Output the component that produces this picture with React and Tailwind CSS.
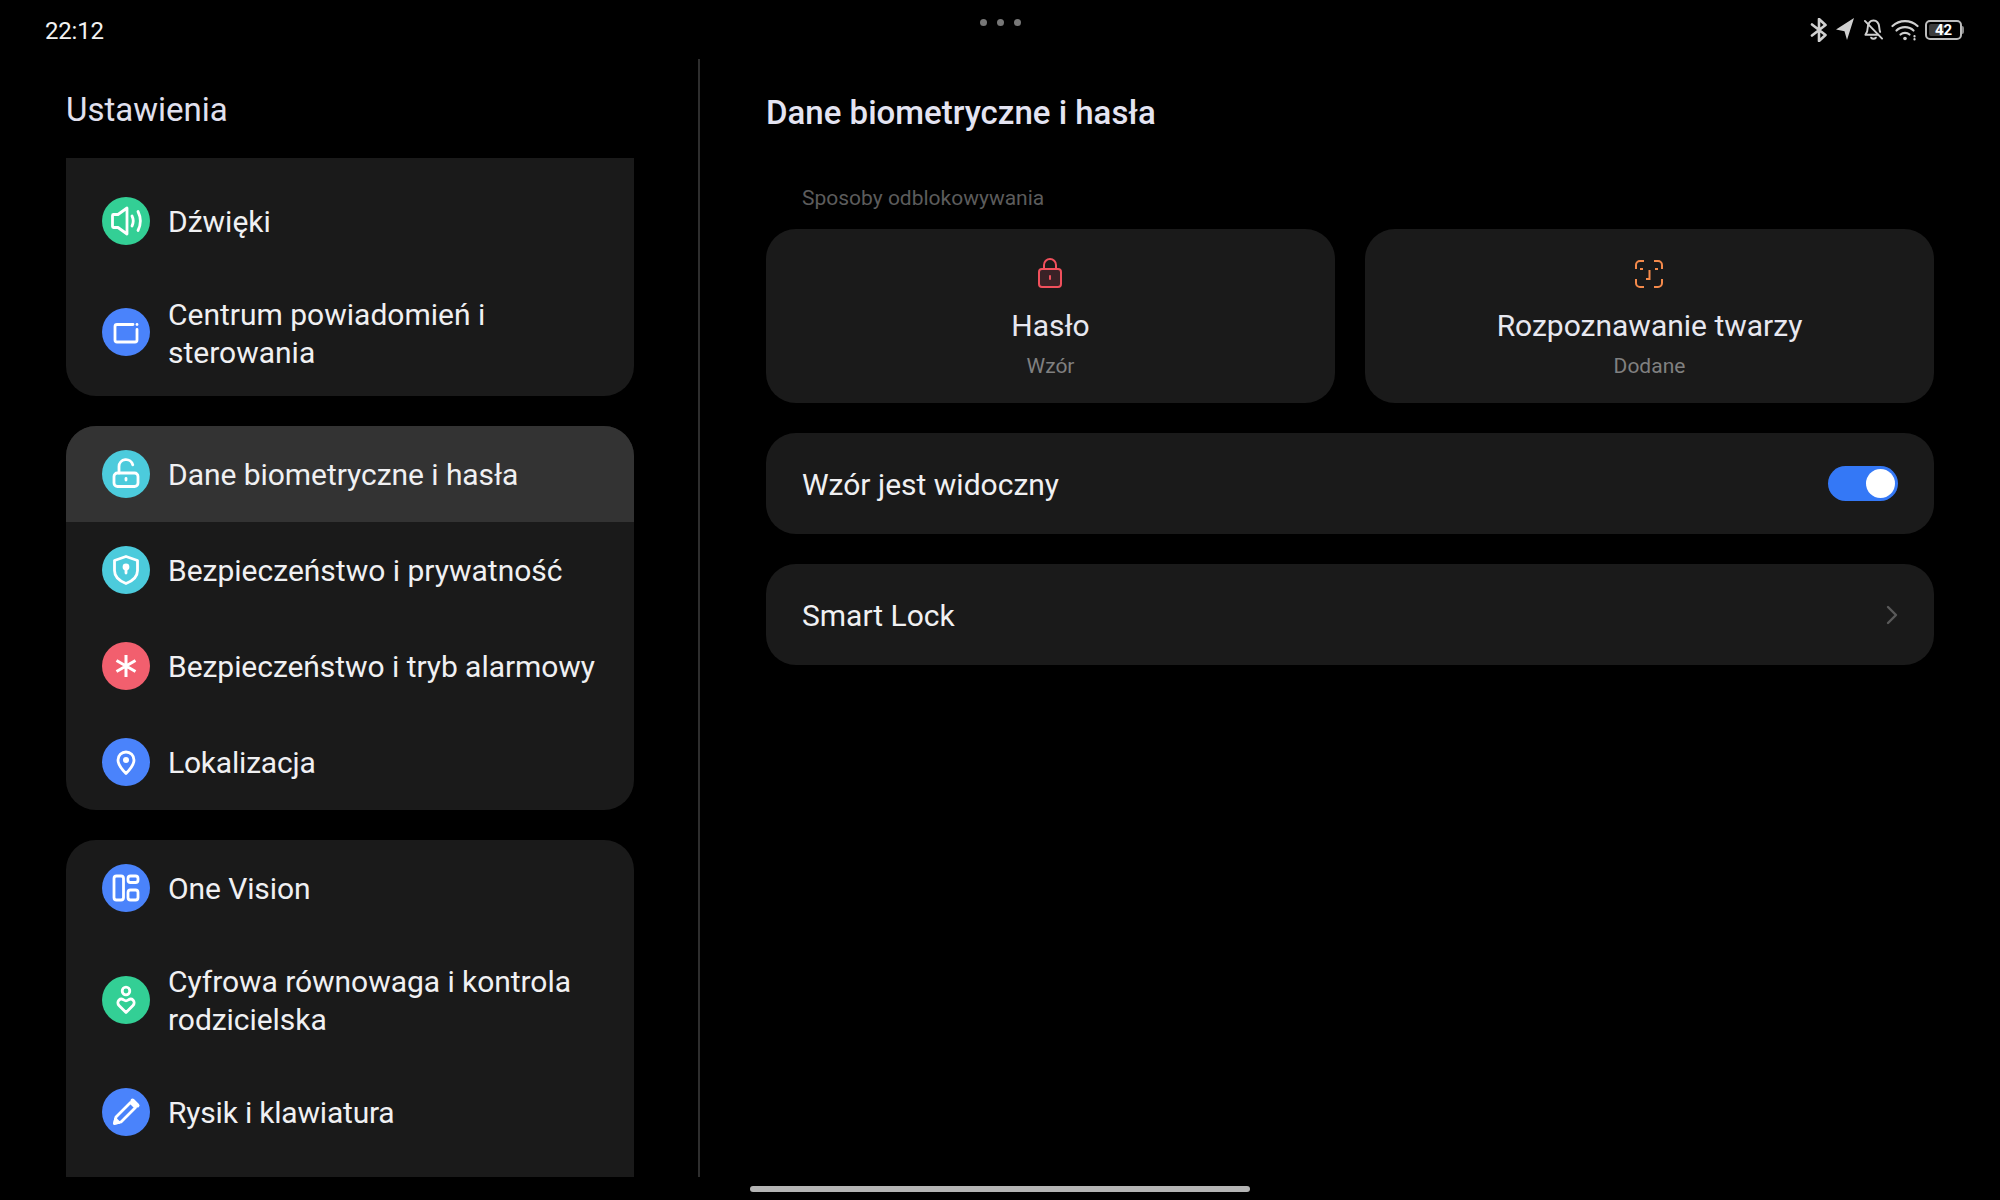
import { ChevronRight } from 'lucide-react';

const BLUE = 'bg-[#4a83fb]';
const GREEN = 'bg-[#33cf95]';
const TEAL = 'bg-[#4ccbdc]';
const RED = 'bg-[#f25f6e]';

// menu icons, all on a 48px circle with white strokes
function Glyph({ children }) {
  return (
    <svg viewBox="0 0 48 48" className="w-12 h-12" fill="none" stroke="white" strokeWidth="2.8" strokeLinecap="round" strokeLinejoin="round">
      {children}
    </svg>
  );
}

const icons = {
  sound: (
    <Glyph>
      <path d="M11.500 17.500h4.500l9-6.500v26l-9-6.500h-4.500a1 1 0 0 1-1-1v-11a1 1 0 0 1 1-1z" />
      <path d="M30 19c1.600 3.200 1.600 6.800 0 10" />
      <path d="M36 14.500c3 6 3 13 0 19" />
    </Glyph>
  ),
  panel: (
    <Glyph>
      <path d="M31 16.500H15a2 2 0 0 0-2 2v13.500a2 2 0 0 0 2 2h18a2 2 0 0 0 2-2V21.500" />
      <path d="M35 16.500h.01" />
    </Glyph>
  ),
  unlock: (
    <Glyph>
      <rect x="12" y="23" width="24" height="13.500" rx="3.500" />
      <path d="M17 23v-6.500a7 7 0 0 1 13.800-1.600" />
      <path d="M24 28.500v1.500" />
    </Glyph>
  ),
  shield: (
    <Glyph>
      <path d="M24 10.500l11.500 4v10c0 6.200-5 10.500-11.500 13-6.500-2.500-11.500-6.800-11.500-13v-10z" />
      <circle cx="24" cy="21" r="2" fill="white" />
      <path d="M24 22v5" />
    </Glyph>
  ),
  asterisk: (
    <Glyph>
      <path d="M24 13v22M14.500 18.500l19 11M33.500 18.500l-19 11" strokeWidth="3" strokeLinecap="butt" />
    </Glyph>
  ),
  pin: (
    <Glyph>
      <path d="M24 35.500c-4.600-4.600-8-8.500-8-13.500a8 8 0 0 1 16 0c0 5-3.400 8.900-8 13.500z" />
      <circle cx="24" cy="22" r="3" fill="white" stroke="none" />
    </Glyph>
  ),
  vision: (
    <Glyph>
      <rect x="12" y="12" width="9.500" height="24" rx="2.500" />
      <rect x="26" y="12" width="10" height="6.500" rx="2.500" />
      <rect x="26" y="26" width="10" height="10" rx="2.500" />
    </Glyph>
  ),
  balance: (
    <Glyph>
      <circle cx="24" cy="15" r="3.800" />
      <path d="M24 36.500l-7-7a3.900 3.900 0 0 1 0-5.500c1.500-1.400 3-1.100 4-.5s1.700 1.300 3 1.300 2-.7 3-1.300 2.500-.9 4 .5a3.900 3.900 0 0 1 0 5.500z" />
    </Glyph>
  ),
  pen: (
    <Glyph>
      <path d="M12.500 35.500l1.500-6.500 14.500-14.500 5 5-14.500 14.500z" fill="none" />
      <path d="M30.500 12.500l5 5" strokeWidth="4" />
      <path d="M12.500 35.500l1-4.500 3.500 3.500z" fill="white" />
    </Glyph>
  ),
};

function Row({ color, icon, active, className = '', textClass = '', children }) {
  return (
    <div className={`flex items-center gap-[18px] pl-9 pr-4 ${active ? 'bg-[#333333]' : ''} ${className}`}>
      <div className={`w-12 h-12 rounded-full shrink-0 ${color}`}>{icons[icon]}</div>
      <div className={`pt-[2px] text-[30px] leading-[38px] text-[#f0f0f2] ${textClass}`}>{children}</div>
    </div>
  );
}

function Card({ className = '', children }) {
  return <div className={`bg-[#1a1a1a] overflow-hidden ${className}`}>{children}</div>;
}

function StatusIcons() {
  return (
    <div className="flex items-center h-6 text-[#d0d0d0]">
      <svg viewBox="0 0 18 24" className="w-[18px] h-6" fill="none" stroke="currentColor" strokeWidth="2.600" strokeLinecap="round" strokeLinejoin="round">
        <path d="M2 6.500l13.500 10.500-6.500 6V1l6.500 6L2 17.500" />
      </svg>
      <svg viewBox="0 0 18 24" className="w-[18px] h-6 ml-2" fill="currentColor">
        <path d="M18 0L0 11.500l8.500 1.800 2.500 8.700z" />
      </svg>
      <svg viewBox="0 0 22 24" className="w-[21px] h-6 ml-[9px]" fill="none" stroke="currentColor" strokeWidth="2" strokeLinecap="round" strokeLinejoin="round">
        <path d="M5 9C5.500 4 8 2 11 2s5.500 2 6 7c.2 1.800.3 3.500 1 5M5 9c0 3-1 6-2.500 8H16" />
        <path d="M8.500 20c1.200 1.600 3.800 1.600 5 0" />
        <path d="M2 2.500l18 18.500" />
      </svg>
      <svg viewBox="0 0 28 24" className="w-7 h-6 ml-[7px]" fill="none" stroke="currentColor" strokeWidth="2.200" strokeLinecap="round">
        <path d="M1.500 8c7-6.500 18-6.500 25 0" />
        <path d="M5.500 12.500c4.500-4.500 12.500-4.500 17 0" />
        <path d="M9.500 16.500c2.500-2.300 6.500-2.300 9 0" />
        <circle cx="14" cy="20.500" r="1.800" fill="currentColor" stroke="none" />
        <path d="M23.500 18v.5M23.500 21v.5" />
      </svg>
      <div className="flex items-center ml-[6px]">
        <div className="w-[37px] h-[20px] rounded-[5px] border-2 border-[#bdbdbd] p-[2px] relative flex items-center">
          <div className="h-full w-[50%] rounded-[2px] bg-[#3d3d3d]" />
          <span className="absolute inset-0 flex items-center justify-center text-[15px] font-bold leading-none text-white">42</span>
        </div>
        <div className="w-[2px] h-2 rounded-r-sm bg-[#888888]" />
      </div>
    </div>
  );
}

function MethodCard({ icon, title, sub }) {
  return (
    <div className="flex-1 h-[174px] rounded-[30px] bg-[#1a1a1a] flex flex-col items-center pt-[29px]">
      {icon}
      <div className="mt-[17px] text-[30px] leading-[38px] text-[#e8e8f0]">{title}</div>
      <div className="mt-[7px] text-[21px] leading-[28px] text-[#808080]">{sub}</div>
    </div>
  );
}

export default function App() {
  return (
    <div className="relative w-[2000px] h-[1200px] bg-black overflow-hidden font-['Roboto',sans-serif] flex flex-col">
      {/* status bar */}
      <div className="h-[59px] shrink-0 flex items-start justify-between pl-[45px] pr-[36px] pt-[16px]">
        <div className="text-[24px] leading-[30px] text-[#f2f2f2] tracking-[-0.2px]">22:12</div>
        <div className="absolute left-[980px] top-[19px] flex gap-[10px]">
          <div className="w-[7px] h-[7px] rounded-full bg-[#777777]" />
          <div className="w-[7px] h-[7px] rounded-full bg-[#777777]" />
          <div className="w-[7px] h-[7px] rounded-full bg-[#777777]" />
        </div>
        <div className="mt-[2px]"><StatusIcons /></div>
      </div>

      <div className="flex flex-1 min-h-0 pb-[23px]">
        {/* left column */}
        <div className="w-[700px] shrink-0 pl-[66px] pr-[64px] flex flex-col border-r-2 border-[#2e2e2e]">
          <div className="h-[99px] shrink-0 pt-[29px] text-[33px] leading-[44px] text-[#e0e0ee]">Ustawienia</div>
          <Card className="rounded-b-[30px] h-[238px]">
            <Row color={GREEN} icon="sound" className="h-[110px] pt-[15px]"><span>Dźwięki</span></Row>
            <Row color={BLUE} icon="panel" className="h-[128px]" textClass="pt-[4px]">Centrum powiadomień i sterowania</Row>
          </Card>
          <Card className="rounded-[30px] mt-[30px] h-[384px]">
            <Row color={TEAL} icon="unlock" active className="h-[96px]" textClass="tracking-[-0.05px]">Dane biometryczne i hasła</Row>
            <Row color={TEAL} icon="shield" className="h-[96px]">Bezpieczeństwo i prywatność</Row>
            <Row color={RED} icon="asterisk" className="h-[96px]" textClass="tracking-[-0.05px]">Bezpieczeństwo i tryb alarmowy</Row>
            <Row color={BLUE} icon="pin" className="h-[96px]" textClass="tracking-[-0.2px]">Lokalizacja</Row>
          </Card>
          <Card className="rounded-t-[30px] mt-[30px] flex-1">
            <Row color={BLUE} icon="vision" className="h-[96px]" textClass="tracking-[-0.1px]">One Vision</Row>
            <Row color={GREEN} icon="balance" className="h-[128px]" textClass="tracking-[-0.05px]">Cyfrowa równowaga i kontrola rodzicielska</Row>
            <Row color={BLUE} icon="pen" className="h-[96px]" textClass="tracking-[-0.2px] pt-0">Rysik i klawiatura</Row>
          </Card>
        </div>

        {/* right column */}
        <div className="flex-1 pl-[66px] pr-[66px]">
          <div className="h-[99px] pt-[32px] text-[33px] leading-[44px] font-medium text-[#e4e4f2]">Dane biometryczne i hasła</div>
          <div className="h-[71px] pt-[26px] pl-9 text-[21px] leading-[28px] text-[#5c5c5c]">Sposoby odblokowywania</div>
          <div className="flex gap-[30px]">
            <MethodCard
              title="Hasło"
              sub="Wzór"
              icon={
                <svg viewBox="0 0 28 32" className="w-7 h-8 mr-[2px]" fill="none" stroke="#f0505c" strokeWidth="2" strokeLinecap="round">
                  <rect x="3" y="11" width="22" height="18" rx="3" fill="#3a2226" />
                  <path d="M8 11V7a6 6 0 0 1 12 0v4" />
                  <path d="M14 18v3" />
                </svg>
              }
            />
            <MethodCard
              title="Rozpoznawanie twarzy"
              sub="Dodane"
              icon={
                <svg viewBox="0 0 30 30" className="w-[30px] h-8 mr-[2px]" fill="none" stroke="#f58a4b" strokeWidth="2">
                  <path d="M2 10V6a4 4 0 0 1 4-4h4M20 2h4a4 4 0 0 1 4 4v4M2 20v4a4 4 0 0 0 4 4h4M28 20v4a4 4 0 0 1-4 4h-4" />
                  <path d="M6 10h3M21 10h3" />
                  <path d="M15.500 11v9H12" />
                </svg>
              }
            />
          </div>
          <div className="mt-[30px] h-[101px] rounded-[30px] bg-[#1a1a1a] flex items-center justify-between pl-9 pr-9">
            <div className="pt-[2px] text-[30px] text-[#f0f0f2]">Wzór jest widoczny</div>
            <div className="w-[70px] h-[35px] rounded-full bg-[#3478f6] flex items-center justify-end pr-[3px]">
              <div className="w-[29px] h-[29px] rounded-full bg-white" />
            </div>
          </div>
          <div className="mt-[30px] h-[101px] rounded-[30px] bg-[#1a1a1a] flex items-center justify-between pl-9 pr-[26px]">
            <div className="pt-[2px] text-[30px] text-[#f0f0f2]">Smart Lock</div>
            <ChevronRight className="w-8 h-8 text-[#5a5a5a]" strokeWidth={1.8} />
          </div>
        </div>
      </div>

      {/* gesture bar */}
      <div className="absolute left-[750px] top-[1186px] w-[500px] h-[6px] rounded-full bg-[#b4b4b4]" />
    </div>
  );
}
